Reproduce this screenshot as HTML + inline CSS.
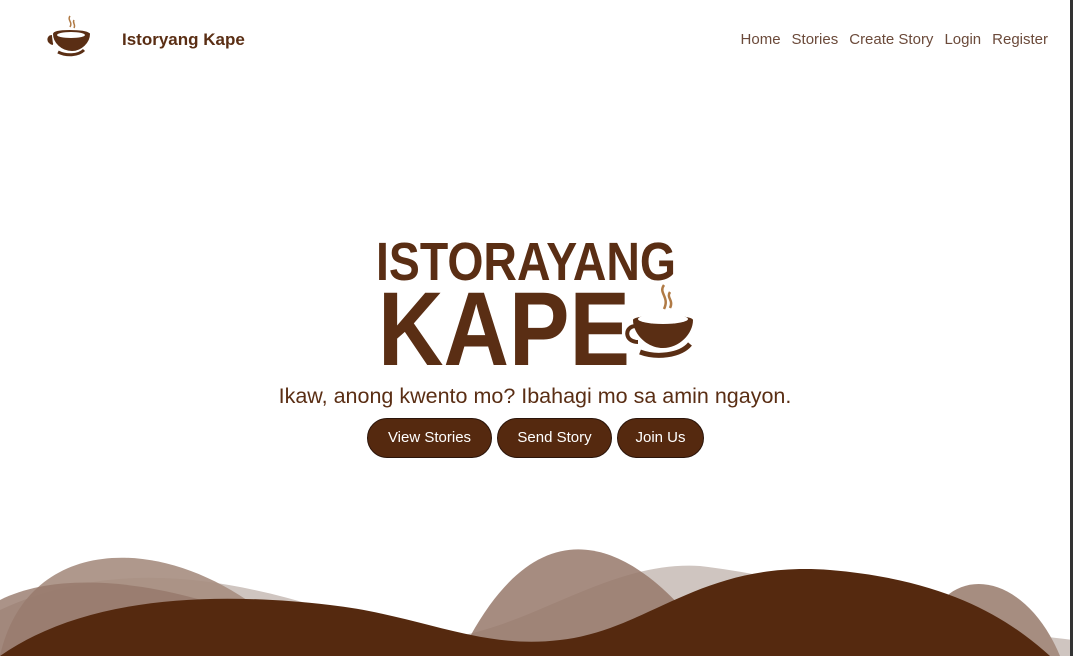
<!DOCTYPE html>
<html><head><meta charset="utf-8"><style>
html,body{margin:0;padding:0;background:#fff;width:1073px;height:656px;overflow:hidden;position:relative;font-family:"Liberation Sans",sans-serif}
.brand{position:absolute;left:122px;top:30px;font-size:17px;font-weight:bold;color:#5a2e14}
nav{position:absolute;top:31px;right:25px;font-size:15px;color:#6b4a3a}
nav span{margin-left:11px}
.sub{position:absolute;top:384px;left:0;width:1070px;text-align:center;font-size:21.5px;color:#5a2e14}
.btns{position:absolute;top:418px;left:367px;display:flex;gap:5px}
.btns div{background:#55290f;color:#fff;border:1px solid #2a140a;border-radius:20px;height:40px;line-height:38px;font-size:15px;padding:0;box-sizing:border-box;text-align:center;white-space:nowrap}
.edge{position:absolute;right:0;top:0;width:3px;height:656px;background:#333}
</style></head><body>
<svg style="position:absolute;left:46px;top:14px" width="46" height="46" viewBox="0 0 46 46">
<path d="M24 2c-3 4 3 6 0 11M28 6c-2 3 2 4 0 8" stroke="#b07a45" stroke-width="1.5" fill="none"/>
<path d="M6 22c-5 0-5 7 1 8M8 20c0-4 30-4 35 0c0 8-8 16-17 16c-10 0-18-8-18-16z" fill="#5a2e14" stroke="#5a2e14" stroke-width="2"/>
<ellipse cx="25" cy="21" rx="14" ry="3" fill="#fff"/>
<path d="M12 38c8 4 20 4 26-2" stroke="#5a2e14" stroke-width="3" fill="none"/>
</svg>
<div class="brand">Istoryang Kape</div>
<nav><span>Home</span><span>Stories</span><span>Create Story</span><span>Login</span><span>Register</span></nav>
<svg style="position:absolute;left:0;top:0" width="1073" height="656">
<text x="376" y="280" textLength="300" lengthAdjust="spacingAndGlyphs" font-family="Liberation Sans" font-weight="bold" font-size="54" fill="#5a2e14">ISTORAYANG</text>
<text x="378" y="365" textLength="252" lengthAdjust="spacingAndGlyphs" font-family="Liberation Sans" font-weight="bold" font-size="105" fill="#5a2e14">KAPE</text>
<path d="M664 285c-6 8 6 12 0 24M670 292c-4 6 4 8 0 16" stroke="#b07a45" stroke-width="2.5" fill="none"/>
<path d="M636 326c-12 0-12 16 2 16" stroke="#5a2e14" stroke-width="4" fill="none"/>
<path d="M633 320c0-6 60-6 60 0c0 14-14 28-30 28c-16 0-30-14-30-28z" fill="#5a2e14"/>
<ellipse cx="663" cy="319" rx="25" ry="5" fill="#fff"/>
<path d="M640 352c16 6 40 4 50-8" stroke="#5a2e14" stroke-width="5" fill="none"/>
<path d="M0 610 C150 540 300 600 420 640 C520 640 600 560 700 566 C820 580 900 620 1073 640 V656 H0Z" fill="#cfc5c0"/>
<path d="M0 656 C30 520 200 530 310 656Z" fill="#a68d80" opacity=".9"/>
<path d="M0 600 C60 570 160 580 260 620 V656 H0Z" fill="#96786a" opacity=".8"/>
<path d="M460 656 C540 490 640 540 720 656Z" fill="#96786a" opacity=".85"/>
<path d="M920 656 C930 560 1020 560 1060 656Z" fill="#a68d80"/>
<path d="M0 656 C80 600 200 590 330 605 C420 615 480 650 560 640 C650 630 700 560 830 570 C950 580 1010 620 1050 656Z" fill="#55290f"/>
</svg>
<div class="sub">Ikaw, anong kwento mo? Ibahagi mo sa amin ngayon.</div>
<div class="btns"><div style="width:125px">View Stories</div><div style="width:115px">Send Story</div><div style="width:87px">Join Us</div></div>
<div class="edge"></div>
</body></html>
